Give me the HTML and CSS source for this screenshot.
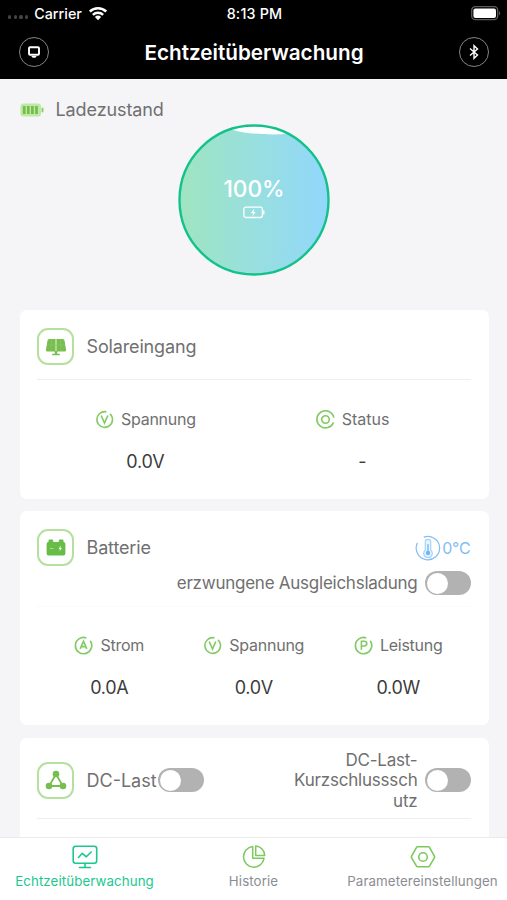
FILE: index.html
```html
<!DOCTYPE html>
<html lang="de">
<head>
    <meta charset="UTF-8">
    <meta name="viewport" content="width=device-width, initial-scale=1.0">
    <title>Echtzeitüberwachung</title>
    <link rel="stylesheet" href="styles.css">
</head>
<body>
    <header class="header">
        <div class="status-bar">
            <div class="carrier">
                <span class="dots"><i></i><i></i><i></i><i></i></span>
                <span>Carrier</span>
                <svg width="20" height="15" viewBox="0 0 20 15" fill="none" stroke="#fff" stroke-width="2.5">
                    <path d="M1.8 5.5a11.8 11.8 0 0 1 16.4 0M4.9 8.8a7.3 7.3 0 0 1 10.2 0"/>
                    <path d="M10 14.2 6.9 11a4.5 4.5 0 0 1 6.2 0z" fill="#fff" stroke="none"/>
                </svg>
            </div>
            <div class="time">8:13 PM</div>
            <svg class="phone-battery" width="30" height="15" viewBox="0 0 30 15">
                <rect x=".7" y=".7" width="26" height="13" rx="3.6" fill="none" stroke="#5c5c5c" stroke-width="1.3"/>
                <rect x="2.4" y="2.4" width="22.6" height="9.6" rx="2" fill="#fff"/>
                <path d="M28 5v4.5c1.6-.7 1.6-3.8 0-4.5z" fill="#5c5c5c"/>
            </svg>
        </div>
        <div class="nav-bar">
            <span class="round-button">
                <svg width="14" height="14" viewBox="0 0 14 14" fill="none" stroke="#fff">
                    <rect x="2" y="2.2" width="10" height="7.5" rx="1" stroke-width="1.9"/>
                    <path d="M4.2 11h5.6L8.3 12.8H5.7z" fill="#fff" stroke="none"/>
                </svg>
            </span>
            <h1>Echtzeitüberwachung</h1>
            <span class="round-button">
                <svg width="12" height="16" viewBox="0 0 12 16" fill="none" stroke="#fff" stroke-width="1.4">
                    <path d="M2 4.5 9.5 11 6 14.3V1.7L9.5 5 2 11.5"/>
                </svg>
            </span>
        </div>
    </header>

    <main class="content">
        <section class="charge">
            <div class="charge-title">
                <svg width="24" height="14" viewBox="0 0 24 14">
                    <rect x=".5" y=".5" width="20.5" height="13" rx="3" fill="#c0e8a5"/>
                    <rect x="21.5" y="4.5" width="2" height="5" rx="1" fill="#8bcf67"/>
                    <path d="M4.2 3v8M8.3 3v8M12.4 3v8M16.5 3v8" stroke="#72bd4b" stroke-width="2.7"/>
                </svg>
                <span>Ladezustand</span>
            </div>
            <div class="gauge">
                <svg class="wave" width="152" height="152" viewBox="0 0 152 152">
                    <defs>
                        <linearGradient id="water">
                            <stop offset="0" stop-color="#9fe5c0"/>
                            <stop offset=".5" stop-color="#98dfdf"/>
                            <stop offset="1" stop-color="#91d7fc"/>
                        </linearGradient>
                        <clipPath id="bowl"><circle cx="76" cy="76" r="74.5"/></clipPath>
                    </defs>
                    <circle cx="76" cy="76" r="74.5" fill="#fff"/>
                    <path d="M0 0H40Q52 6 66 8.5 88 11.5 112 9.8L152 6V152H0z" fill="url(#water)" clip-path="url(#bowl)"/>
                    <circle cx="76" cy="76" r="74.5" fill="none" stroke="#13c28b" stroke-width="2.4"/>
                </svg>
                <div class="gauge-text">
                    <span>100%</span>
                    <svg width="22" height="13" viewBox="0 0 22 13">
                        <rect x=".9" y="1.2" width="18.5" height="10.3" rx="2" fill="none" stroke="#fff" stroke-width="1.3"/>
                        <path d="M20.7 4.5v4" stroke="#fff" stroke-width="1.5"/>
                        <path d="M11.2 3 7.8 7h2.1l-.6 3 3.5-4h-2.1z" fill="#fff"/>
                    </svg>
                </div>
            </div>
        </section>

        <section class="card solar">
            <div class="card-header">
                <span class="tile">
                    <svg width="22" height="20" viewBox="0 0 22 20" fill="#76be4e">
                        <path d="M4.3 2h6.3v12.500H2.400C1 14.500.7 13.700 1 12.500l1.500-9Q2.800 2 4.300 2zM11.400 2h6.300q1.500 0 1.800 1.500l1.500 9c.2 1.200-.1 2-1.400 2h-8.200z"/>
                        <path d="M9.800 14h2.400v2.700h2.600v1.600H7.200v-1.600h2.600z"/>
                        <path d="M2 8h18M6.700 2l-.8 12M15.300 2l.8 12" stroke="#8bca68" stroke-width=".6"/>
                    </svg>
                </span>
                <h2>Solareingang</h2>
            </div>
            <div class="values">
                <div class="value">
                    <div class="label">
                        <svg class="ring" viewBox="0 0 20 20"><path d="M15.800 4A8.200 8.200 0 1 1 12 2"/><path d="m6.500 5.800 3.500 8 3.500-8"/></svg>
                        <span>Spannung</span>
                    </div>
                    <strong>0.0V</strong>
                </div>
                <div class="value">
                    <div class="label status">
                        <svg class="ring" viewBox="0 0 20 20"><path d="M18.800 8A9 9 0 1 0 18.400 13"/><circle cx="10" cy="10" r="4"/></svg>
                        <span>Status</span>
                    </div>
                    <strong>-</strong>
                </div>
            </div>
        </section>

        <section class="card battery">
            <div class="card-header">
                <span class="tile">
                    <svg width="22" height="20" viewBox="0 0 22 20">
                        <path d="M3.500 4V2.500q0-1 1-1h2.700q1 0 1 1V4h5.600V2.500q0-1 1-1h2.700q1 0 1 1V4q1.900.2 1.900 2v9.500q0 2-2 2H3.600q-2 0-2-2V6q0-1.800 1.900-2z" fill="#68bd48"/>
                        <path d="M5 10.500h3.500" stroke="#a9dc91"/>
                        <path d="m15.600 7.800-2 3h1.300l-.3 2.500 2.200-3.300h-1.300z" fill="#fff"/>
                    </svg>
                </span>
                <h2>Batterie</h2>
                <div class="temperature">
                    <svg width="26" height="26" viewBox="0 0 26 26" fill="none" stroke="#82bdf4" stroke-width="1.2">
                        <path d="M10 1.700A11.700 11.700 0 1 1 3 6.800" transform="rotate(-6 13 13)"/>
                        <path d="M10.300 15V7a2.700 2.700 0 0 1 5.400 0v8a4.300 4.300 0 1 1-5.400 0z" fill="#e8f5ff" stroke="#a5d3fa"/>
                        <path d="M13 9v9" stroke-width="1.5"/>
                        <circle cx="13" cy="18" r="2.2" fill="#70b5f5" stroke="none"/>
                    </svg>
                    <span>0°C</span>
                </div>
            </div>
            <div class="option">
                <span>erzwungene Ausgleichsladung</span>
                <span class="switch"></span>
            </div>
            <div class="values">
                <div class="value">
                    <div class="label">
                        <svg class="ring" viewBox="0 0 20 20"><path d="M17 5A8.600 8.600 0 1 1 13 2"/><path d="M6.500 13.500 10 5.500l3.500 8M8 11.200h4"/></svg>
                        <span>Strom</span>
                    </div>
                    <strong>0.0A</strong>
                </div>
                <div class="value">
                    <div class="label">
                        <svg class="ring" viewBox="0 0 20 20"><path d="M15.800 4A8.200 8.200 0 1 1 12 2"/><path d="m6.500 5.800 3.500 8 3.500-8"/></svg>
                        <span>Spannung</span>
                    </div>
                    <strong>0.0V</strong>
                </div>
                <div class="value">
                    <div class="label">
                        <svg class="ring" viewBox="0 0 20 20"><path d="M17 5A8.600 8.600 0 1 1 13 2"/><path d="M7.800 14.500v-9h3q2.700.2 2.700 2.500t-2.700 2.500h-3"/></svg>
                        <span>Leistung</span>
                    </div>
                    <strong>0.0W</strong>
                </div>
            </div>
        </section>

        <section class="card load">
            <div class="card-header">
                <span class="tile">
                    <svg width="22" height="20" viewBox="0 0 22 20" fill="#76be4e">
                        <path d="M11 4 4.200 16h13.600z" fill="none" stroke="#76be4e" stroke-width="1.8"/>
                        <circle cx="11" cy="4" r="3.3"/>
                        <circle cx="4" cy="16" r="3.3"/>
                        <circle cx="18" cy="16" r="3.3"/>
                    </svg>
                </span>
                <h2>DC-Last</h2>
                <span class="switch"></span>
                <div class="protection">DC-Last-Kurzschlussschutz</div>
                <span class="switch"></span>
            </div>
        </section>
    </main>

    <nav class="tab-bar">
        <a class="tab active">
            <svg width="26" height="24" viewBox="0 0 26 24" fill="none" stroke="#1bc88e" stroke-width="1.6" stroke-linecap="round" stroke-linejoin="round">
                <rect x="1.2" y="1.3" width="23.5" height="17" rx="2.5"/>
                <path d="m6.500 12.500 3.800-4.200 4 3.500L19.200 7M13 18.500v3.800M7.500 22.500h11"/>
            </svg>
            <span>Echtzeitüberwachung</span>
        </a>
        <a class="tab">
            <svg width="26" height="24" viewBox="0 0 26 24" fill="none" stroke="#7dc95d" stroke-width="1.5" stroke-linejoin="round">
                <path d="M11.700 1.600A10.300 10.300 0 1 0 23 13.300H11.700z"/>
                <path d="M14.700 1v9.400h9A9.500 9.500 0 0 0 14.700 1z"/>
            </svg>
            <span>Historie</span>
        </a>
        <a class="tab">
            <svg width="26" height="24" viewBox="0 0 26 24" fill="none" stroke="#7dc95d" stroke-width="1.6" stroke-linejoin="round">
                <path d="M7.500 1.700h11q.7 0 1 .6l5 9q.3.700 0 1.400l-5 8.500q-.3.600-1 .6h-11q-.7 0-1-.6l-5-8.500q-.3-.7 0-1.400l5-9q.3-.6 1-.6z"/>
                <circle cx="13" cy="12" r="4.3"/>
            </svg>
            <span>Parametereinstellungen</span>
        </a>
    </nav>
</body>
</html>
```

FILE: styles.css
```css
* {
    box-sizing: border-box;
}
body {
    margin: 0;
    height: 900px;
    display: flex;
    flex-direction: column;
    overflow: hidden;
    background-color: #f5f5f8;
    color: #707070;
    font-family: Inter, "Liberation Sans", sans-serif;
    font-size: 17px;
}
h1, h2 {
    margin: 0;
}
svg {
    display: block;
    flex: none;
}

/* header */
.header {
    flex: none;
    height: 79px;
    background: #000;
    color: #fff;
}
.status-bar {
    display: grid;
    grid-template-columns: 1fr auto 1fr;
    align-items: center;
    height: 26px;
    padding: 0 6px 0 8px;
    font-size: 14.3px;
    font-weight: 500;
}
.time {
    letter-spacing: 0.2px;
}
.carrier {
    display: flex;
    align-items: center;
    gap: 6px;
}
.dots {
    display: flex;
    gap: 2.5px;
    padding-top: 8px;
}
.dots i {
    width: 3.2px;
    height: 3.2px;
    border-radius: 50%;
    background: #444;
}
.phone-battery {
    justify-self: end;
}
.nav-bar {
    display: flex;
    align-items: center;
    justify-content: space-between;
    height: 52px;
    padding: 0 18px 0 19px;
}
.nav-bar h1 {
    font-size: 20.7px;
    font-weight: 600;
}
.round-button {
    display: flex;
    align-items: center;
    justify-content: center;
    width: 30px;
    height: 30px;
    border: 1px solid #858585;
    border-radius: 50%;
}

/* content */
.content {
    flex: 1;
    min-height: 0;
    overflow: hidden;
    padding: 0 18px 0 19.5px;
}
.charge {
    height: 231px;
    padding-top: 19px;
}
.charge-title {
    display: flex;
    align-items: center;
    gap: 12px;
    height: 23px;
    font-size: 18px;
    letter-spacing: -0.1px;
}
.gauge {
    display: grid;
    width: 152px;
    height: 152px;
    margin: 3px 0 0 158.5px;
}
.wave, .gauge-text {
    grid-area: 1 / 1;
}
.gauge-text {
    display: flex;
    flex-direction: column;
    align-items: center;
    gap: 4px;
    padding-top: 51px;
    color: #fff;
    font-size: 22.7px;
    font-weight: 500;
    line-height: 27px;
}

/* cards */
.card {
    padding: 0 18.5px 0 17.5px;
    margin-bottom: 12px;
    border-radius: 7px;
    background: #fff;
}
.card-header {
    display: flex;
    align-items: center;
}
.card-header h2 {
    margin-left: 12.5px;
    font-size: 18px;
    font-weight: 400;
    letter-spacing: -0.15px;
}
.tile {
    display: flex;
    flex: none;
    align-items: center;
    justify-content: center;
    width: 37px;
    height: 37px;
    border: 2px solid #b5e0a0;
    border-radius: 11px;
}
.values {
    display: flex;
    border-top: 1px solid #eeeef0;
}
.value {
    flex: 1;
    text-align: center;
}
.label {
    display: flex;
    align-items: center;
    justify-content: center;
    gap: 7px;
    height: 20px;
    margin-top: 29px;
    font-size: 16px;
    letter-spacing: -0.25px;
}
.label.status {
    padding-right: 19px;
    letter-spacing: 0;
}
.ring {
    width: 19px;
    height: 19px;
    fill: none;
    stroke: #82ca64;
    stroke-width: 1.7;
}
.value strong {
    display: block;
    margin-top: 21px;
    color: #3c3c3c;
    font-size: 18px;
    font-weight: 400;
    letter-spacing: -0.3px;
    line-height: 24px;
}
.solar {
    height: 189px;
}
.solar .card-header {
    height: 69px;
    padding-top: 4px;
}
.battery {
    height: 214px;
    padding-top: 18px;
    margin-bottom: 13px;
}
.battery .values {
    border-color: #fafafa;
}
.battery .label {
    margin-top: 28px;
}
.temperature {
    display: flex;
    align-items: center;
    gap: 1px;
    margin-left: auto;
    color: #82bdf4;
    font-size: 16px;
    letter-spacing: -0.2px;
}
.option {
    display: flex;
    align-items: center;
    justify-content: flex-end;
    gap: 7px;
    height: 34px;
    margin-bottom: 6px;
    letter-spacing: -0.25px;
}
.switch {
    flex: none;
    width: 46px;
    height: 24px;
    padding: 1.5px 2px;
    border-radius: 12px;
    background: #b2b2b2;
}
.switch::before {
    content: "";
    display: block;
    width: 21px;
    height: 21px;
    border-radius: 50%;
    background: #fff;
}
.load {
    height: 140px;
}
.load .card-header {
    height: 81px;
    padding-top: 4px;
    border-bottom: 1px solid #eeeef0;
}
.load h2 {
    margin-right: 1px;
    letter-spacing: 0;
}
.protection {
    width: 126px;
    margin: 1px 7px 0 auto;
    line-height: 20.5px;
    letter-spacing: -0.2px;
    text-align: right;
    overflow-wrap: anywhere;
}

/* tabs */
.tab-bar {
    display: flex;
    flex: none;
    height: 63px;
    border-top: 1px solid #ebebed;
    background: #fff;
}
.tab {
    display: flex;
    flex: 1 1 0;
    flex-direction: column;
    align-items: center;
    gap: 4px;
    min-width: 0;
    padding-top: 7px;
    color: #8b8d92;
    font-size: 13.3px;
    letter-spacing: 0.1px;
    white-space: nowrap;
}
.tab.active {
    color: #1bc88e;
}
```
